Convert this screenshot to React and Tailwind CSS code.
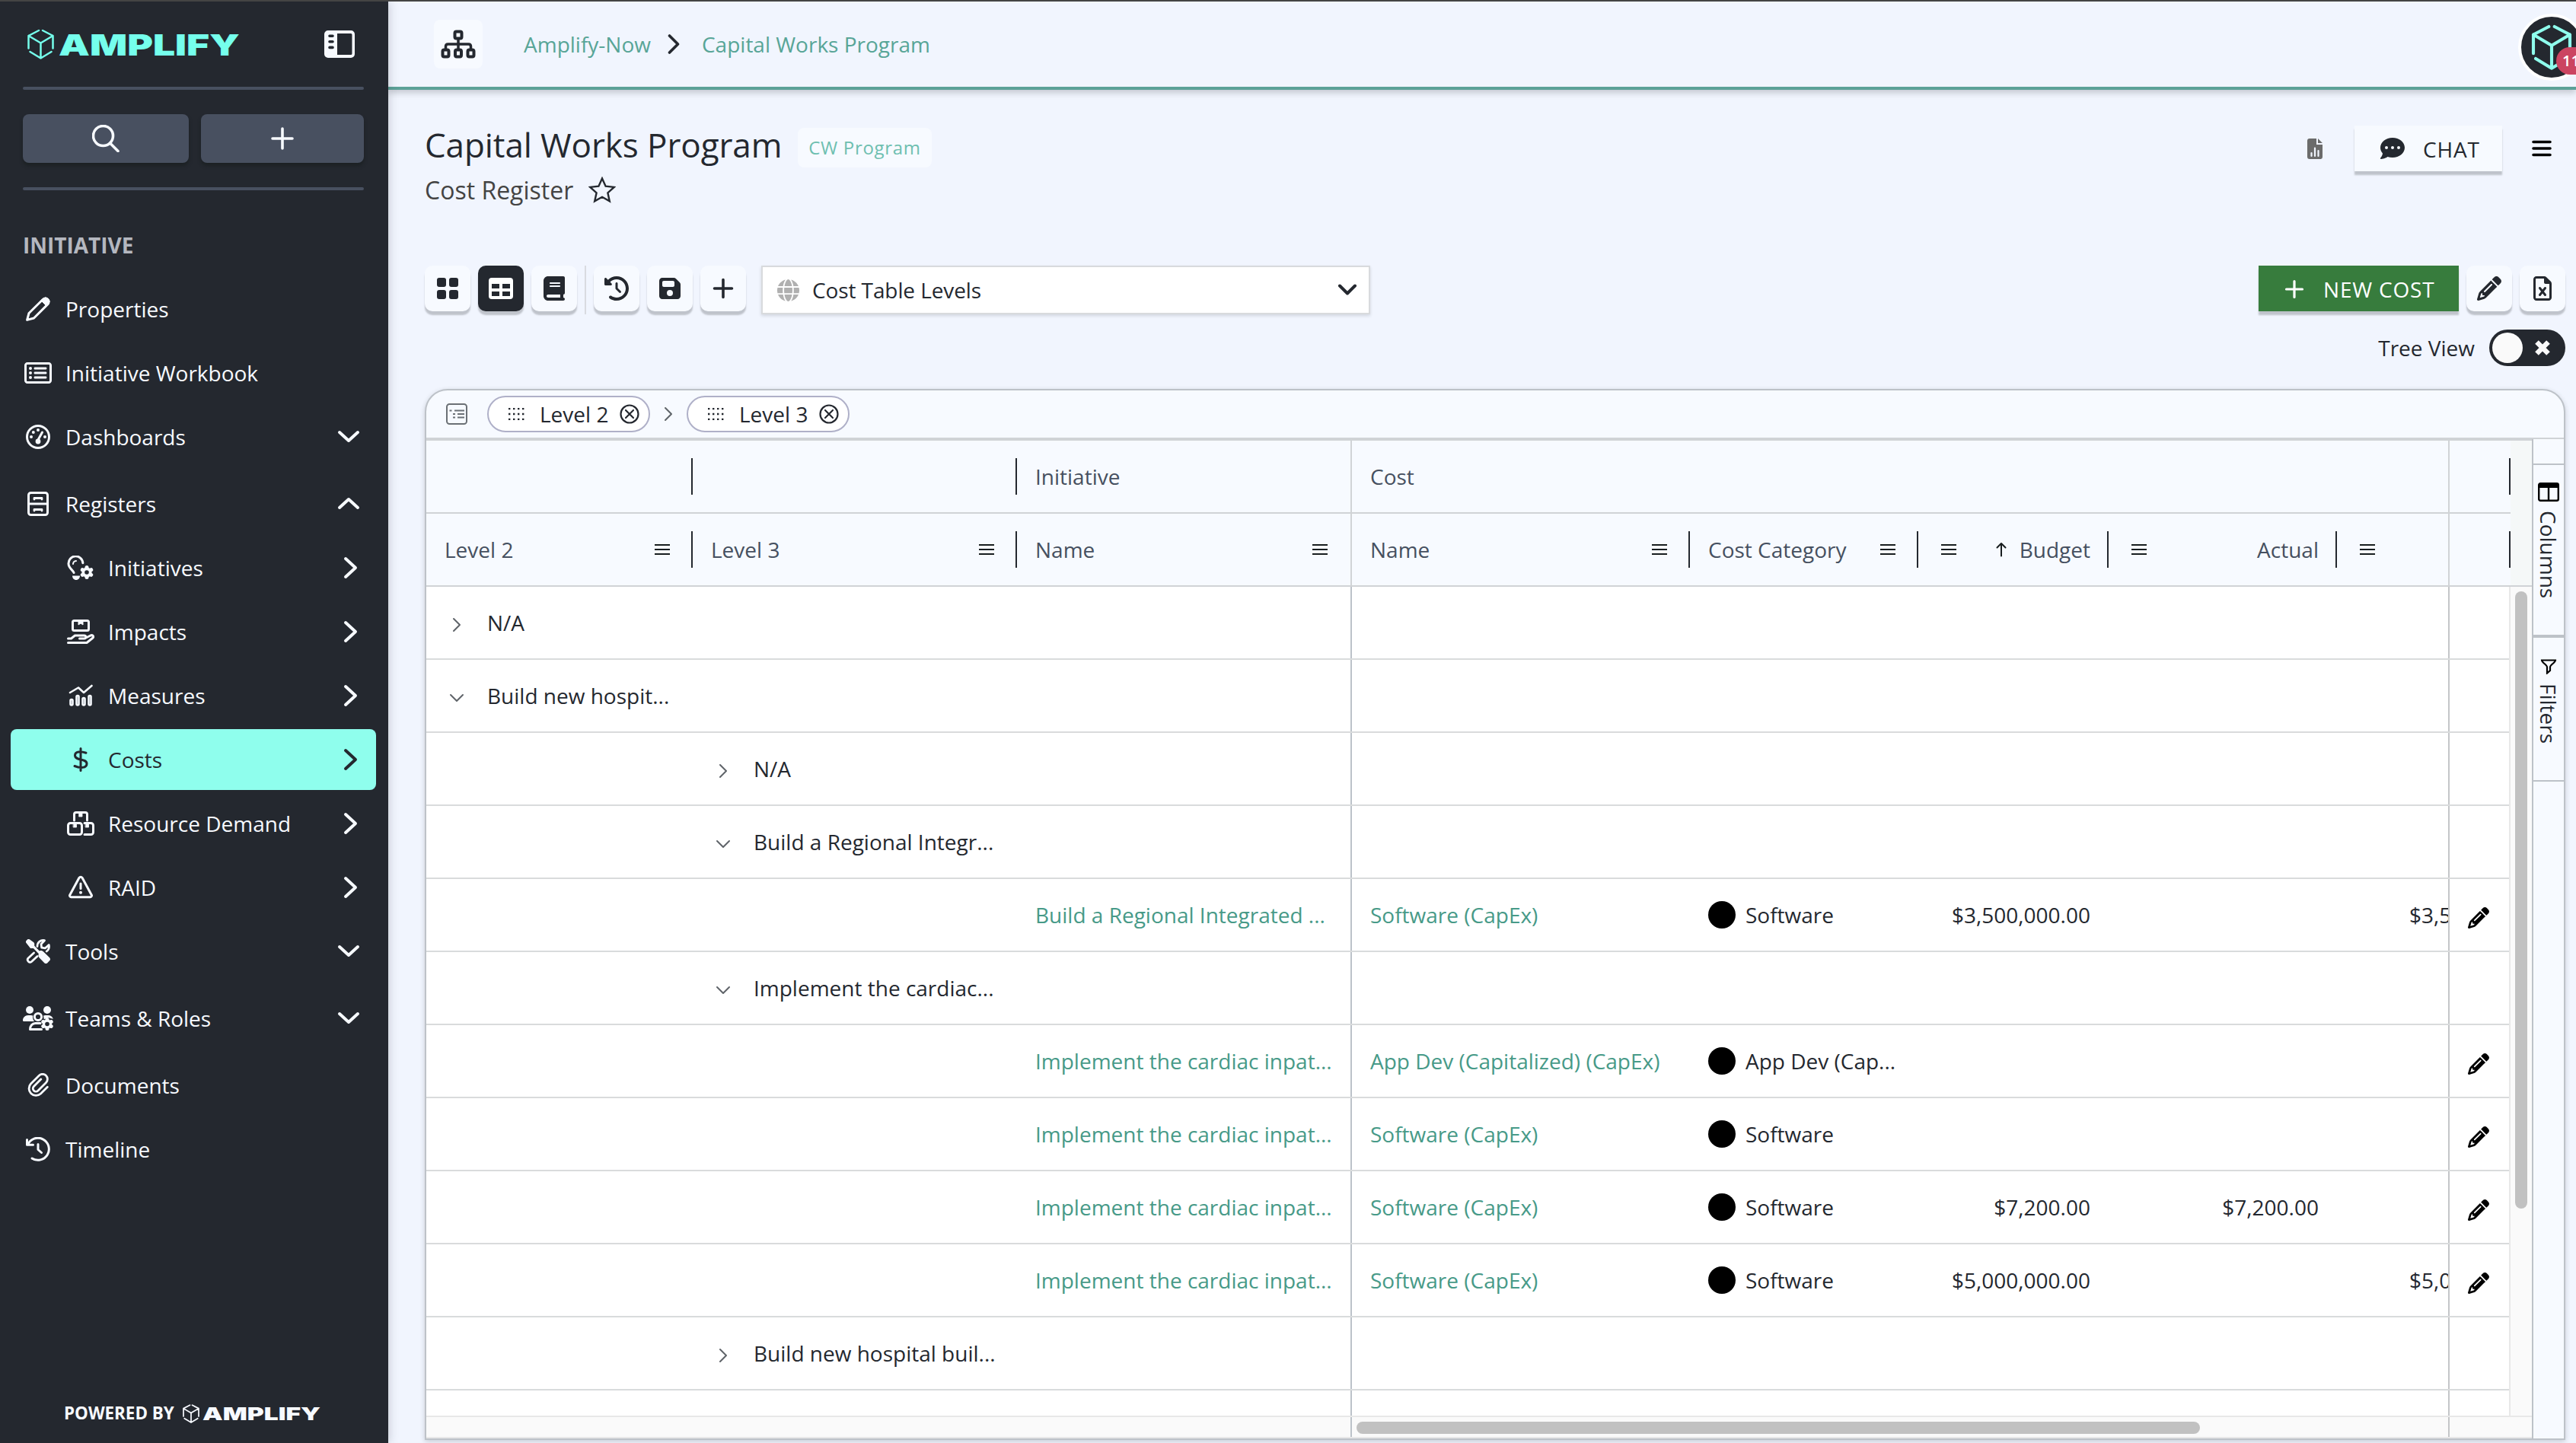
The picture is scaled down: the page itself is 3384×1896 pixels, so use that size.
import React, { useState } from "react";
import {
  FaBook,
  FaClockRotateLeft,
  FaCommentDots,
  FaFloppyDisk,
  FaGlobe,
  FaPencil,
  FaRegFileExcel,
  FaRegRectangleList,
  FaXmark,
} from "react-icons/fa6";

/* ── Icons ──────────────────────────────────────────────────────────────── */

function Icon({ w = 32, h = 32, sw = 3, className = "", children }) {
  return (
    <svg
      width={w}
      height={h}
      viewBox={`0 0 ${w} ${h}`}
      fill="none"
      stroke="currentColor"
      strokeWidth={sw}
      strokeLinecap="round"
      strokeLinejoin="round"
      className={`shrink-0 ${className}`}
    >
      {children}
    </svg>
  );
}

// small filled cog: three crossed spokes under a disc
function Gear({ x, y, r = 6.6 }) {
  return (
    <g transform={`translate(${x} ${y})`}>
      {[0, 60, 120].map((a) => (
        <path key={a} d={`M0-${r}V${r}`} transform={`rotate(${a})`} strokeWidth="5" />
      ))}
      <circle r={r} fill="currentColor" stroke="none" />
      <circle r="2.8" fill="#24282f" stroke="none" />
    </g>
  );
}

const PenIcon = () => (
  <Icon>
    <path d="M1.6 30.4 4 21.500 22.500 3.200a4 4 0 0 1 5.600 0l.8.8a4 4 0 0 1 0 5.600L10.500 28z" />
    <path d="m20 5 7 7 3-3.200a4.500 4.500 0 0 0-.2-6l-.6-.6a4.500 4.500 0 0 0-6-.2z" fill="currentColor" strokeWidth="1" />
  </Icon>
);

const GaugeIcon = () => (
  <Icon>
    <circle cx="16" cy="16" r="14.5" />
    <path d="m21.500 10-5 9" />
    <circle cx="16" cy="22" r="3.4" fill="currentColor" stroke="none" />
    <g fill="currentColor" stroke="none">
      <circle cx="16" cy="7" r="2" />
      <circle cx="9.8" cy="10" r="2" />
      <circle cx="7" cy="16" r="2" />
      <circle cx="25" cy="16" r="2" />
    </g>
  </Icon>
);

const CabinetIcon = () => (
  <Icon w={28}>
    <rect x="1.5" y="1.5" width="25" height="29" rx="3" />
    <path d="M2 16h24M9 10V8.500h10V10M9 25v-1.500h10V25" strokeWidth="2.8" />
  </Icon>
);

const BulbGearIcon = () => (
  <Icon w={36}>
    <path d="M9 22.500C7.500 18.500 2 16.500 2 10.800a9.300 9.300 0 0 1 18.900-1" />
    <path d="M8 11a4.300 4.300 0 0 1 4-4" strokeWidth="2" />
    <path d="M7 26.500h10c0 3-2 5.500-5 5.500s-5-2.500-5-5.500z" fill="currentColor" stroke="none" />
    <Gear x={26} y={22} />
  </Icon>
);

const HandBoxIcon = () => (
  <Icon w={36}>
    <rect x="7.5" y="1.5" width="21" height="13" rx="2" />
    <path d="M15 2v5l3-2 3 2V2z" fill="currentColor" strokeWidth="1" />
    <path d="M1.500 25h4l5-4h12c3 0 3 4 0 4h-6M23 25l8-4c3-1.300 5 1.500 2.500 3.500L26 30.500H1.500" />
  </Icon>
);

const ChartIcon = () => (
  <Icon sw={2.6}>
    <path d="m2 12 11-6.500 7 6.500L30.500 3" />
    <rect x="2.5" y="21" width="3" height="7.5" rx="1.5" />
    <rect x="10.5" y="16" width="3" height="12.5" rx="1.5" />
    <rect x="18.500" y="19" width="3" height="9.5" rx="1.5" />
    <rect x="26.500" y="16" width="3" height="12.5" rx="1.5" />
  </Icon>
);

const DollarIcon = () => (
  <Icon w={20}>
    <path d="M10 1.500v29M17 7.300C10 5 2.500 5 2.500 10.500c0 7.500 15.500 3.500 15.500 11 0 6-9 6-16 3" />
  </Icon>
);

const BoxesIcon = () => (
  <Icon w={36}>
    <path d="M9.500 12V4a2.500 2.500 0 0 1 2.500-2.500h12A2.500 2.500 0 0 1 26.500 4v8" />
    <rect x="1.5" y="15.5" width="18" height="15" rx="3" />
    <path d="M23 15.500h8.500a3 3 0 0 1 3 3v9a3 3 0 0 1-3 3H23" />
    <path d="M16 2h4v5h-4zM8.500 16h4v5h-4zM24.500 16h4v5h-4z" fill="currentColor" strokeWidth=".8" />
  </Icon>
);

const AlertIcon = () => (
  <Icon>
    <path d="M14 3.300a2.500 2.500 0 0 1 4 0L30 25.500a2 2 0 0 1-2 3.200H4a2 2 0 0 1-2-3.200z" />
    <path d="M16 11v6.500" />
    <circle cx="16" cy="22.8" r="2" fill="currentColor" stroke="none" />
  </Icon>
);

const ToolsIcon = () => (
  <Icon>
    <path
      d="M10.500 18 3 25a3.200 3.200 0 0 0 4.500 4.500l7.500-7M15 9.500C15 4 19.500.6 24.500 1.700L20 6.500l.7 4.700 4.800.6 4.700-4.300c1 4-.7 6.700-3 8.500"
      strokeWidth="2.8"
    />
    <path
      d="M.3 4.800a2.500 2.500 0 0 1 0-2.600L2.200.3a2.500 2.500 0 0 1 2.600 0l5.600 3.900.8 1.500v3.100l6.600 6.700c2-.8 4-.4 5.600 1.200l7.700 7.600c1.200 1.400 1.200 2.800 0 4l-2.800 2.900c-1.200 1.200-2.800 1.200-4 0l-6.300-6.400c-1.600-1.600-2-3.700-1.100-5.600L9.900 12H6z"
      fill="currentColor"
      stroke="none"
    />
  </Icon>
);

const TeamsIcon = () => (
  <Icon w={40}>
    <g fill="currentColor" stroke="none">
      <circle cx="9" cy="5" r="5" />
      <circle cx="32" cy="5" r="5" />
      <path d="M0 18.700C0 15 3 12 6.700 12h4c1 0 1.800.2 2.600.6-.6 3 0 5.400 1.700 7.400H1.300A1.300 1.300 0 0 1 0 18.700zM27 12.600c.8-.4 1.600-.6 2.600-.6h3.700c3 0 5.700 2 6.500 4.800l-3-.8-3-1-6 2.300z" />
    </g>
    <circle cx="20" cy="14" r="4.6" />
    <path d="M24.500 30.500H9.500c0-4.500 3-8 7-8h6.500" />
    <Gear x={32} y={23.500} r={6} />
  </Icon>
);

const ClipIcon = () => (
  <Icon w={28} sw={2.8}>
    <path d="m26.300 18.300-8.800 8.700a9.200 9.200 0 0 1-13-13L15.300 3.200a6.400 6.400 0 0 1 9.200 9.200L14 23a3.900 3.900 0 0 1-5.600-5.600l9.400-9.300" />
  </Icon>
);

const HistoryIcon = () => (
  <Icon>
    <path d="M1.500 3.500v6.700h8M2.500 10A14.500 14.500 0 1 1 8 28" />
    <path d="M16 9.500v7l4.500 4" />
  </Icon>
);

const SitemapIcon = () => (
  <Icon w={46} h={38} sw={4}>
    <rect x="18.5" y="2.5" width="9" height="9" rx="2" />
    <rect x="2.5" y="26.5" width="8" height="9" rx="2" />
    <rect x="19" y="26.5" width="8" height="9" rx="2" />
    <rect x="35.5" y="26.5" width="8" height="9" rx="2" />
    <path d="M23 12v14M6.500 26v-4c0-2 1-3 3-3h27c2 0 3 1 3 3v4" strokeWidth="3.5" />
  </Icon>
);

const PanelIcon = () => (
  <svg width="40" height="36" viewBox="0 0 40 36" className="text-[#f7faff]">
    <path
      fillRule="evenodd"
      fill="currentColor"
      d="M5 0h30a5 5 0 0 1 5 5v26a5 5 0 0 1-5 5H5a5 5 0 0 1-5-5V5a5 5 0 0 1 5-5zm12 4v28h18a1.500 1.500 0 0 0 1.500-1.500v-25A1.500 1.500 0 0 0 35 4z"
    />
    <path d="M7 7.200h4M7 14.800h4M7 22.400h4" stroke="#24282f" strokeWidth="3.6" strokeLinecap="round" />
  </svg>
);

const MenuLines = () => (
  <svg width="20" height="16" viewBox="0 0 20 16" className="shrink-0 text-[#181d1f]">
    <path d="M0 2h20M0 8h20M0 14h20" stroke="currentColor" strokeWidth="2" />
  </svg>
);

const Chevron = ({ dir }) => {
  const d = {
    down: "m8 14 12 11 12-11",
    up: "m8 25 12-11 12 11",
    right: "m16 8 13 12-13 12",
  }[dir];
  return (
    <Icon w={40} h={40} sw={4}>
      <path d={d} />
    </Icon>
  );
};

const SmallChevron = ({ open }) => (
  <Icon w={20} h={20} sw={2} className="text-[#5f6469]">
    <path d={open ? "m2 6 8 8 8-8" : "m6 2 8 8-8 8"} />
  </Icon>
);

const CubeIcon = ({ w, h, sw = 5 }) => (
  <svg
    width={w}
    height={h}
    viewBox="0 0 70 80"
    fill="none"
    stroke="currentColor"
    strokeWidth={sw}
    strokeLinecap="round"
    strokeLinejoin="round"
    className="shrink-0"
  >
    <path d="M30 4 3 18v33M40 4l27 14v33M3 18l32 19 32-19M35 37v40M7 60l28 17 28-17" />
  </svg>
);

function Wordmark({ width, height, size }) {
  return (
    <svg width={width} height={height} className="shrink-0 overflow-visible">
      <text
        x="0"
        y={height}
        textLength={width}
        lengthAdjust="spacingAndGlyphs"
        fill="currentColor"
        fontFamily="Inter, sans-serif"
        fontWeight="900"
        fontSize={size}
      >
        AMPLIFY
      </text>
    </svg>
  );
}

/* ── Sidebar ────────────────────────────────────────────────────────────── */

const NAV_ITEMS = [
  { label: "Properties", icon: <PenIcon /> },
  { label: "Initiative Workbook", icon: <FaRegRectangleList size={36} /> },
  { label: "Dashboards", icon: <GaugeIcon />, dir: "down", spaced: true },
  { label: "Registers", icon: <CabinetIcon />, dir: "up" },
  { label: "Initiatives", icon: <BulbGearIcon />, dir: "right", sub: true },
  { label: "Impacts", icon: <HandBoxIcon />, dir: "right", sub: true },
  { label: "Measures", icon: <ChartIcon />, dir: "right", sub: true },
  { label: "Costs", icon: <DollarIcon />, dir: "right", sub: true },
  { label: "Resource Demand", icon: <BoxesIcon />, dir: "right", sub: true },
  { label: "RAID", icon: <AlertIcon />, dir: "right", sub: true },
  { label: "Tools", icon: <ToolsIcon />, dir: "down", spaced: true },
  { label: "Teams & Roles", icon: <TeamsIcon />, dir: "down", spaced: true },
  { label: "Documents", icon: <ClipIcon /> },
  { label: "Timeline", icon: <HistoryIcon /> },
];

function Sidebar() {
  const [active, setActive] = useState("Costs");

  return (
    <aside className="relative z-10 flex w-[510px] shrink-0 flex-col bg-[#24282f] text-[#f7faff] shadow-[0_0_12px_rgba(36,40,47,0.25)]">
      <div className="flex h-[112px] items-center justify-between pl-9 pr-11">
        <div className="flex items-center gap-[6px] text-[#75ffec]">
          <CubeIcon w={35} h={40} />
          <Wordmark width={238} height={29} size={39} />
        </div>
        <PanelIcon />
      </div>
      <div className="mx-[30px] h-1 w-[448px] rounded-full bg-[#485060]" />
      <div className="mx-[30px] mt-8 flex w-[448px] gap-4">
        <button className="flex h-16 w-[218px] items-center justify-center rounded-lg bg-[#485060] shadow-[0_4px_4px_rgba(24,30,32,0.7)]">
          <Icon w={36} h={36} sw={3.6}>
            <circle cx="14.5" cy="14.5" r="13" />
            <path d="M24 24.500 34 34.500" />
          </Icon>
        </button>
        <button className="flex h-16 w-[214px] items-center justify-center rounded-lg bg-[#485060] shadow-[0_4px_4px_rgba(24,30,32,0.7)]">
          <Icon w={30} h={30} sw={3.6}>
            <path d="M15 2v26M2 15h26" />
          </Icon>
        </button>
      </div>
      <div className="mx-[30px] mt-8 h-1 w-[448px] rounded-full bg-[#485060]" />
      <p className="mt-[52px] h-10 pl-[30px] text-[28px] font-bold leading-10 text-[#b4b7bf]">INITIATIVE</p>

      <nav className="mt-6 flex flex-col px-[14px]">
        {NAV_ITEMS.map((item) => (
          <button
            key={item.label}
            onClick={() => setActive(item.label)}
            className={`flex h-20 w-[480px] items-center rounded-lg pr-4 text-left ${item.sub ? "pl-[72px]" : "pl-4"} ${
              item.spaced ? "mb-2" : "mb-1"
            } ${active === item.label ? "bg-[#8ffeed] text-[#24282f]" : ""}`}
          >
            <span className="flex w-10 shrink-0 justify-center">{item.icon}</span>
            <span className="ml-4 flex-1 whitespace-nowrap">{item.label}</span>
            {item.dir && <Chevron dir={item.dir} />}
          </button>
        ))}
      </nav>

      <div className="mt-auto flex h-[77px] items-start pl-[84px] pt-[22px]">
        <span className="mr-[11px] whitespace-nowrap text-[22.4px] font-bold leading-8">POWERED BY</span>
        <div className="flex h-8 items-center gap-1">
          <CubeIcon w={22} h={25} sw={5.5} />
          <Wordmark width={155} height={17} size={23.5} />
        </div>
      </div>
    </aside>
  );
}

/* ── Top header + page header ───────────────────────────────────────────── */

function TopBar() {
  return (
    <header className="flex h-[116px] shrink-0 items-center border-b-4 border-[#5ca198] pl-[60px] shadow-[0_4px_8px_rgba(36,40,47,0.22)]">
      <button className="flex size-16 items-center justify-center rounded-lg bg-[#f7faff]">
        <SitemapIcon />
      </button>
      <nav className="ml-[54px] flex items-center whitespace-nowrap text-[#58a597]">
        <a>Amplify-Now</a>
        <Icon w={16} h={28} sw={3.6} className="ml-[22px] mr-[29px] text-[#24282f]">
          <path d="m2.500 3 11 11-11 11" />
        </Icon>
        <a>Capital Works Program</a>
      </nav>
      <div className="relative -mr-3 ml-auto mt-2 flex size-[88px] items-center justify-center rounded-full border-4 border-white bg-[#24282f] text-[#8ffeed]">
        <CubeIcon w={56} h={60} sw={5.5} />
        <span className="absolute left-[46px] top-10 flex h-9 w-12 items-center rounded-full bg-[#cb4461] pl-2 text-[20px] font-semibold text-white">
          11
        </span>
      </div>
    </header>
  );
}

function PageHeader() {
  return (
    <div className="flex h-[182px] pl-12 pr-[14px] pt-[42px]">
      <div>
        <div className="flex items-center">
          <h1 className="h-[60px] w-[470px] whitespace-nowrap text-[44px] leading-[60px] tracking-[-0.1px]">
            Capital Works Program
          </h1>
          <span className="ml-[20px] mt-[8px] flex h-[52px] w-44 items-center justify-center rounded-lg bg-[#f7faff] text-[24px] tracking-[0.7px] text-[#6ebfb0]">
            CW Program
          </span>
        </div>
        <div className="mt-2 flex h-11 items-center gap-5 text-[32px] text-[#444]">
          <span className="whitespace-nowrap">Cost Register</span>
          <Icon w={36} h={36} sw={2.4} className="text-[#24282f]">
            <path
              d="m18 2.500 4.600 10.200 11.200 1.200-8.400 7.500 2.400 11L18 26.800l-9.800 5.600 2.400-11-8.400-7.500 11.200-1.200z"
              strokeLinejoin="miter"
            />
          </Icon>
        </div>
      </div>
      <div className="ml-auto mt-[5px] flex h-[60px] items-center">
        <svg width="20" height="27" viewBox="0 0 20 27" className="text-[#6b6b6b]">
          <path d="M3 0h9v8h8v16a3 3 0 0 1-3 3H3a3 3 0 0 1-3-3V3a3 3 0 0 1 3-3zM14 0l6 6h-6z" fill="currentColor" />
          <path d="M5.500 19v4M10 12.500V23M14.500 16v7" stroke="#f1f5fe" strokeWidth="2.2" strokeLinecap="round" />
        </svg>
        <button className="ml-[42px] flex h-[60px] w-[194px] items-center bg-[#f7faff] pl-[34px] tracking-[0.8px] shadow-[0_5px_2px_#bfc3cb]">
          <FaCommentDots size={32} />
          <span className="ml-6 mt-[2px]">CHAT</span>
        </button>
        <Icon w={26} h={24} sw={3.6} className="ml-[39px] mr-[18px] text-black">
          <path d="M2 3.500h22M2 12h22M2 20.500h22" />
        </Icon>
      </div>
    </div>
  );
}

/* ── Toolbar ────────────────────────────────────────────────────────────── */

function ToolButton({ dark, children }) {
  return (
    <button
      className={`flex size-[60px] shrink-0 items-center justify-center rounded-[10px] shadow-[0_5px_2px_#bfc3cb] ${
        dark ? "bg-[#24282f] text-white" : "bg-[#f7faff] text-[#24282f]"
      }`}
    >
      {children}
    </button>
  );
}

function Toolbar() {
  return (
    <div className="flex h-[64px] items-start pl-12 pr-[14px]">
      <div className="flex gap-[10px]">
        <ToolButton>
          <svg width="28" height="28" viewBox="0 0 28 28" fill="currentColor">
            <rect width="12" height="12" rx="3" />
            <rect x="16" width="12" height="12" rx="3" />
            <rect y="16" width="12" height="12" rx="3" />
            <rect x="16" y="16" width="12" height="12" rx="3" />
          </svg>
        </ToolButton>
        <ToolButton dark>
          <svg width="32" height="28" viewBox="0 0 32 28">
            <rect width="32" height="28" rx="4" fill="currentColor" />
            <path d="M4 8h10v6H4zM18 8h10v6H18zM4 18h10v6H4zM18 18h10v6H18z" fill="#24282f" />
          </svg>
        </ToolButton>
        <ToolButton>
          <FaBook size={32} />
        </ToolButton>
        <div className="h-16 w-[2px] bg-[#d9dbe0]" />
        <ToolButton>
          <FaClockRotateLeft size={32} />
        </ToolButton>
        <ToolButton>
          <FaFloppyDisk size={32} />
        </ToolButton>
        <ToolButton>
          <Icon w={28} h={28} sw={3.6}>
            <path d="M14 2.500v23M2.500 14h23" />
          </Icon>
        </ToolButton>
      </div>
      <div className="ml-5 flex h-16 w-[800px] items-center border-2 border-[#d8dadd] bg-white pl-[19px] pr-[14px] shadow-[0_2px_4px_rgba(36,40,47,0.15)]">
        <FaGlobe size={29} className="text-[#b0b0b0]" />
        <span className="ml-[17px] flex-1 tracking-[-0.1px]">Cost Table Levels</span>
        <Icon w={28} h={20} sw={4}>
          <path d="m4 4.500 10 10 10-10" />
        </Icon>
      </div>
      <button className="ml-auto flex h-[60px] w-[263px] items-center bg-[#377c3d] pl-[34px] tracking-[0.8px] text-white shadow-[0_5px_2px_#bfc3cb]">
        <Icon w={26} h={26} sw={3.2} className="mt-[2px]">
          <path d="M13 2.500v21M2.500 13h21" />
        </Icon>
        <span className="ml-[25px] mt-[2px] whitespace-nowrap">NEW COST</span>
      </button>
      <div className="ml-[10px] flex gap-[10px]">
        <ToolButton>
          <FaPencil size={32} />
        </ToolButton>
        <ToolButton>
          <FaRegFileExcel size={32} />
        </ToolButton>
      </div>
    </div>
  );
}

function TreeToggle() {
  return (
    <div className="mt-5 flex h-12 items-center justify-end pr-[14px]">
      <span className="mr-[19px]">Tree View</span>
      <div className="flex h-12 w-[100px] items-center justify-between rounded-full bg-[#24282f] pl-1 pr-[16px]">
        <span className="size-10 rounded-full bg-[#fafafa]" />
        <Icon w={28} h={28} sw={6.5} className="text-[#fafafa]">
          <path d="m6.500 6.500 15 15M21.500 6.500l-15 15" strokeLinecap="butt" />
        </Icon>
      </div>
    </div>
  );
}

/* ── Cost grid ──────────────────────────────────────────────────────────── */

const CARDIAC = "Implement the cardiac inpat...";

const ROWS = [
  { group: 2, label: "N/A" },
  { group: 2, label: "Build new hospit...", open: true },
  { group: 3, label: "N/A" },
  { group: 3, label: "Build a Regional Integr...", open: true },
  { name: "Build a Regional Integrated ...", cost: "Software (CapEx)", category: "Software", budget: "$3,500,000.00", forecast: "$3,500,000.00" },
  { group: 3, label: "Implement the cardiac...", open: true },
  { name: CARDIAC, cost: "App Dev (Capitalized) (CapEx)", category: "App Dev (Cap..." },
  { name: CARDIAC, cost: "Software (CapEx)", category: "Software" },
  { name: CARDIAC, cost: "Software (CapEx)", category: "Software", budget: "$7,200.00", actual: "$7,200.00" },
  { name: CARDIAC, cost: "Software (CapEx)", category: "Software", budget: "$5,000,000.00", forecast: "$5,000,000.00" },
  { group: 3, label: "Build new hospital buil..." },
  {},
];

const Separator = () => <span className="h-12 w-[2px] shrink-0 bg-[#24282f]" />;

function Chip({ label }) {
  return (
    <div className="flex h-12 w-[214px] items-center rounded-full border-2 border-[#afb0c8] bg-white pl-[25px]">
      <svg width="22" height="16" viewBox="0 0 22 16" className="text-[#24282f]">
        <path
          d="M1 1h2.400M7 1h2.400M13 1h2.400M19 1h2.400M1 8h2.400M7 8h2.400M13 8h2.400M19 8h2.400M1 15h2.400M7 15h2.400M13 15h2.400M19 15h2.400"
          stroke="currentColor"
          strokeWidth="2.4"
        />
      </svg>
      <span className="ml-[20px] w-[90px] whitespace-nowrap">{label}</span>
      <Icon w={26} h={26} sw={2.2} className="ml-[15px]">
        <circle cx="13" cy="13" r="11.5" />
        <path d="m8 8 10 10M18 8 8 18" />
      </Icon>
    </div>
  );
}

function GroupPanel() {
  return (
    <div className="flex h-[64px] shrink-0 items-center border-b-2 border-[#d0d3d6] pl-[26px]">
      <Icon w={28} h={28} sw={2} className="text-[#6b7075]">
        <rect x="1" y="1" width="26" height="26" rx="3.5" />
        <path d="M4.500 9.500h3M11 9.500h13M9 14h3M15 14h9M9 18.500h3M15 18.500h9" strokeLinecap="butt" />
      </Icon>
      <div className="ml-[26px] flex items-center">
        <Chip label="Level 2" />
        <div className="mx-[14px]">
          <SmallChevron />
        </div>
        <Chip label="Level 3" />
      </div>
    </div>
  );
}

function HeaderCell({ label, className, numeric, sorted, last }) {
  if (numeric) {
    return (
      <div className={`flex shrink-0 items-center pl-[30px] ${className}`}>
        <MenuLines />
        <span className="ml-auto flex items-center pr-[22px]">
          {sorted && (
            <Icon w={16} h={20} sw={2} className="mr-4 text-[#181d1f]">
              <path d="M8 18.500V2M2.500 7.500 8 2l5.500 5.500" />
            </Icon>
          )}
          {label}
        </span>
        <Separator />
      </div>
    );
  }
  return (
    <div className={`flex shrink-0 items-center pl-6 ${className}`}>
      <span className="flex-1 whitespace-nowrap">{label}</span>
      <MenuLines />
      {last ? (
        <span className="w-[30px]" />
      ) : (
        <>
          <span className="w-7" />
          <Separator />
        </>
      )}
    </div>
  );
}

function GridHeader() {
  return (
    <div className="flex shrink-0 border-t-2 border-[#d0d3d6] font-medium text-[#465060]">
      <div className="w-[2738px]">
        <div className="flex h-24 border-b-2 border-[#d0d3d6]">
          <div className="flex w-[1216px] items-center border-r-2 border-[#d0d3d6]">
            <div className="flex w-[350px] justify-end">
              <Separator />
            </div>
            <div className="flex w-[426px] justify-end">
              <Separator />
            </div>
            <span className="pl-6">Initiative</span>
          </div>
          <div className="flex w-[1440px] items-center pl-6">Cost</div>
          <div className="flex flex-1 items-center justify-end border-l-2 border-[#d0d3d6]">
            <Separator />
          </div>
        </div>
        <div className="flex h-24 border-b-2 border-[#d0d3d6]">
          <div className="flex w-[1216px] border-r-2 border-[#d0d3d6]">
            <HeaderCell label="Level 2" className="w-[350px]" />
            <HeaderCell label="Level 3" className="w-[426px]" />
            <HeaderCell label="Name" className="w-[438px]" last />
          </div>
          <div className="flex w-[1440px] overflow-hidden">
            <HeaderCell label="Name" className="w-[444px]" />
            <HeaderCell label="Cost Category" className="w-[300px]" />
            <HeaderCell label="Budget" className="w-[250px]" numeric sorted />
            <HeaderCell label="Actual" className="w-[300px]" numeric />
            <div className="flex items-center pl-[30px]">
              <MenuLines />
            </div>
          </div>
          <div className="flex flex-1 items-center justify-end border-l-2 border-[#d0d3d6]">
            <Separator />
          </div>
        </div>
      </div>
      <div className="flex-1 border-b-2 border-[#d0d3d6] bg-[#f5f8f8]" />
    </div>
  );
}

function GridRow({ row }) {
  return (
    <div className="flex h-24 shrink-0 border-b-2 border-[#d9dbdc]">
      <div className="flex w-[1216px] items-center whitespace-nowrap border-r-2 border-[#bcc2c9]">
        {row.group && (
          <div className={`flex items-center ${row.group === 2 ? "pl-[30px]" : "pl-[380px]"}`}>
            <span className="mt-[6px]">
              <SmallChevron open={row.open} />
            </span>
            <span className="ml-[30px]">{row.label}</span>
          </div>
        )}
        {row.name && <a className="pl-[800px] text-[#479a88]">{row.name}</a>}
      </div>
      <div className="flex w-[1440px] items-center overflow-hidden whitespace-nowrap">
        {row.name && (
          <>
            <a className="w-[444px] shrink-0 pl-6 text-[#479a88]">{row.cost}</a>
            <span className="flex w-[300px] shrink-0 items-center pl-6">
              <span className="mr-[13px] size-9 rounded-full bg-black" />
              {row.category}
            </span>
            <span className="w-[250px] shrink-0 pr-6 text-right">{row.budget}</span>
            <span className="w-[300px] shrink-0 pr-6 text-right">{row.actual}</span>
            <span className="w-[300px] shrink-0 pr-[23px] text-right">{row.forecast}</span>
          </>
        )}
      </div>
      <div className="flex flex-1 items-center border-l-2 border-[#c4c6c8] pl-6 pt-[8px] text-black">
        {row.name && <FaPencil size={28} />}
      </div>
    </div>
  );
}

function SideTabs() {
  return (
    <div className="flex w-[42px] shrink-0 flex-col border-l-2 border-[#bdc2c8] pt-8">
      <button className="flex h-[227px] flex-col items-center border-y-2 border-[#bdc2c8] pt-[23px]">
        <svg width="28" height="25" viewBox="0 0 28 25" className="text-black">
          <rect x="1.2" y="1.2" width="25.6" height="22.6" rx="2" fill="none" stroke="currentColor" strokeWidth="2.4" />
          <path d="M1 1h26v6H1z" fill="currentColor" />
          <path d="M14 7v17" stroke="currentColor" strokeWidth="2.4" />
        </svg>
        <span className="mt-3 leading-[38px] [writing-mode:vertical-rl]">Columns</span>
      </button>
      <button className="flex h-[191px] flex-col items-center border-y-2 border-[#bdc2c8] pt-7">
        <Icon w={22} h={20} sw={2.2} className="text-black">
          <path d="M2 1.500h18c0 3-7 6-7 9V15l-4 3.500v-8c0-3-7-6-7-9z" strokeLinejoin="miter" />
        </Icon>
        <span className="mt-3 leading-[38px] [writing-mode:vertical-rl]">Filters</span>
      </button>
    </div>
  );
}

function CostGrid() {
  return (
    <div className="ml-12 mt-[30px] flex h-[1381px] w-[2812px] flex-col overflow-hidden rounded-t-[30px] border-2 border-[#bdc2c8] bg-[#f7faff] shadow-[0_2px_6px_rgba(36,40,47,0.2)]">
      <GroupPanel />
      <div className="flex min-h-0 flex-1">
        <div className="flex w-[2766px] flex-col">
          <GridHeader />
          <div className="flex min-h-0 flex-1 bg-white">
            <div className="flex w-[2736px] flex-col overflow-hidden">
              {ROWS.map((row, i) => (
                <GridRow key={i} row={row} />
              ))}
            </div>
            <div className="flex-1 border-l-2 border-[#e8e8e8] bg-[#fafafa] pl-[6px] pt-[6px]">
              <div className="h-[811px] w-4 rounded-full bg-[#c1c1c1]" />
            </div>
          </div>
          <div className="flex h-[30px] shrink-0 border-b-2 border-t-2 border-[#e8e8e8] bg-[#fafafa]">
            <div className="w-[1216px] border-r-2 border-[#bcc2c9]" />
            <div className="w-[1440px] pl-[6px] pt-[6px]">
              <div className="h-4 w-[1108px] rounded-full bg-[#c1c1c1]" />
            </div>
            <div className="flex-1 border-l-2 border-[#c4c6c8]" />
          </div>
        </div>
        <SideTabs />
      </div>
    </div>
  );
}

export default function App() {
  return (
    <div className="flex h-[1896px] w-[3384px] overflow-hidden border-t-2 border-[#444] bg-[#f1f5fe] font-['Open_Sans','Noto_Sans',sans-serif] text-[28px] leading-10 text-[#24282f]">
      <Sidebar />
      <main className="flex min-w-0 flex-1 flex-col">
        <TopBar />
        <PageHeader />
        <div className="mt-[49px]">
          <Toolbar />
        </div>
        <TreeToggle />
        <CostGrid />
      </main>
    </div>
  );
}
